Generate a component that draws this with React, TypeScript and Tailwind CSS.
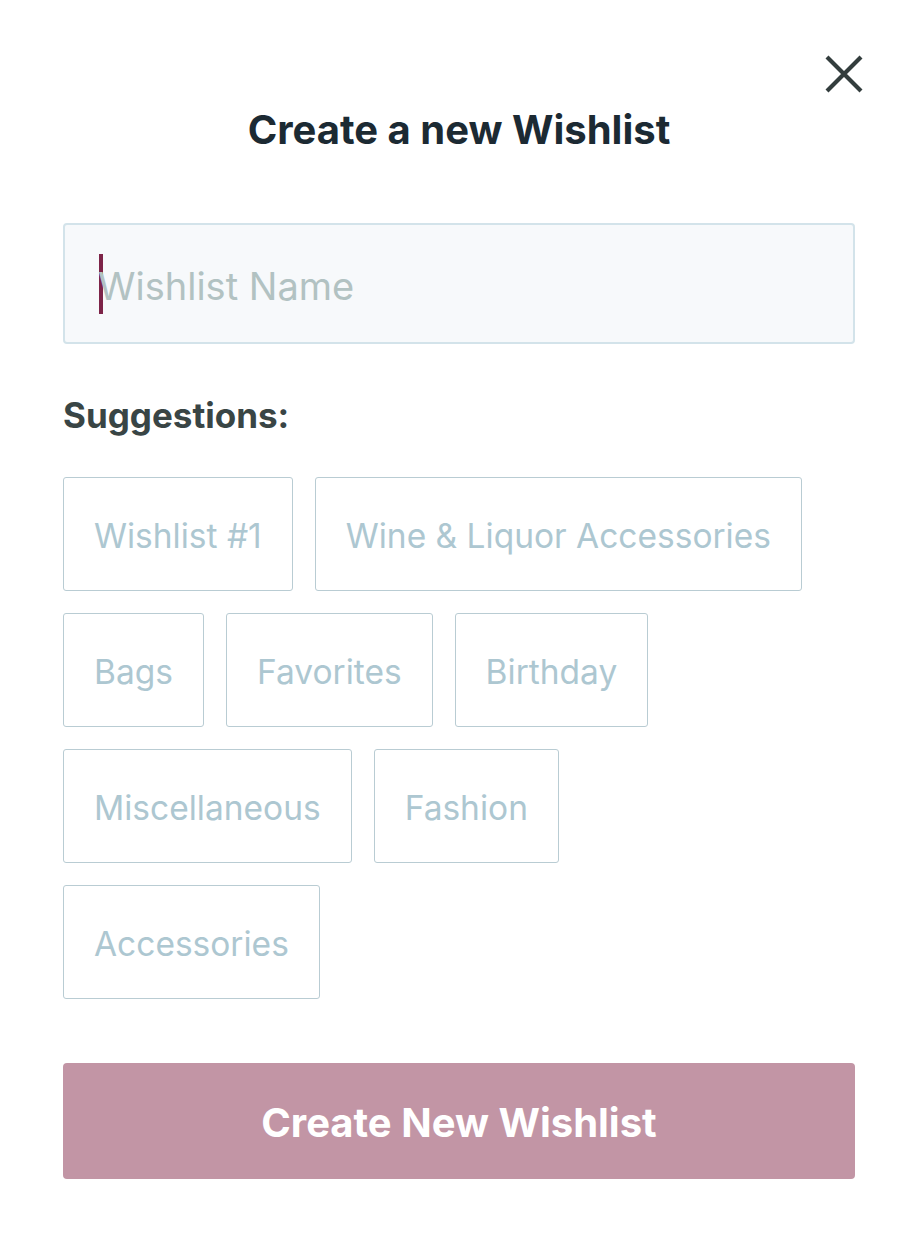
const suggestions = [
  'Wishlist #1',
  'Wine & Liquor Accessories',
  'Bags',
  'Favorites',
  'Birthday',
  'Miscellaneous',
  'Fashion',
  'Accessories',
]

function CloseIcon() {
  return (
    <svg className="h-[40px] w-[40px]" viewBox="0 0 40 40" fill="none" stroke="currentColor" strokeWidth={4.2}>
      <path d="M3 3L37 37M37 3L3 37" />
    </svg>
  )
}

export default function App() {
  return (
    <div className="relative min-h-[1243px] w-[918px] bg-white px-[63px] pt-[106px] font-[family-name:Inter,sans-serif]">
      <button className="absolute right-[54px] top-[54px] text-[#333d3d]">
        <CloseIcon />
      </button>

      <h1 className="text-center text-[40px] font-bold leading-[48px] text-[#1c2a33]">Create a new Wishlist</h1>

      <div className="mt-[69px] flex h-[121px] items-center rounded-[4px] border-2 border-[#d3e3ea] bg-[#f7f9fb] pl-[34px]">
        <span className="h-[60px] w-[4px] shrink-0 bg-[#7d2448]" />
        <span className="-ml-[5px] pt-[6px] text-[38px] text-[#b2c2c2]">Wishlist Name</span>
      </div>

      <h2 className="mt-[49px] text-[35px] font-bold leading-[44px] text-[#394545]">Suggestions:</h2>

      <div className="mt-[40px] flex flex-wrap gap-[22px] pr-[40px]">
        {suggestions.map((s) => (
          <button
            key={s}
            className="h-[114px] rounded-[3px] border border-[#b9ccd3] px-[30px] pt-[4px] text-[33.5px] text-[#adc7d1]"
          >
            {s}
          </button>
        ))}
      </div>

      <button className="mt-[64px] h-[116px] w-full rounded-[4px] bg-[#c295a5] pt-[4px] text-[40px] font-bold text-white">
        Create New Wishlist
      </button>
    </div>
  )
}
